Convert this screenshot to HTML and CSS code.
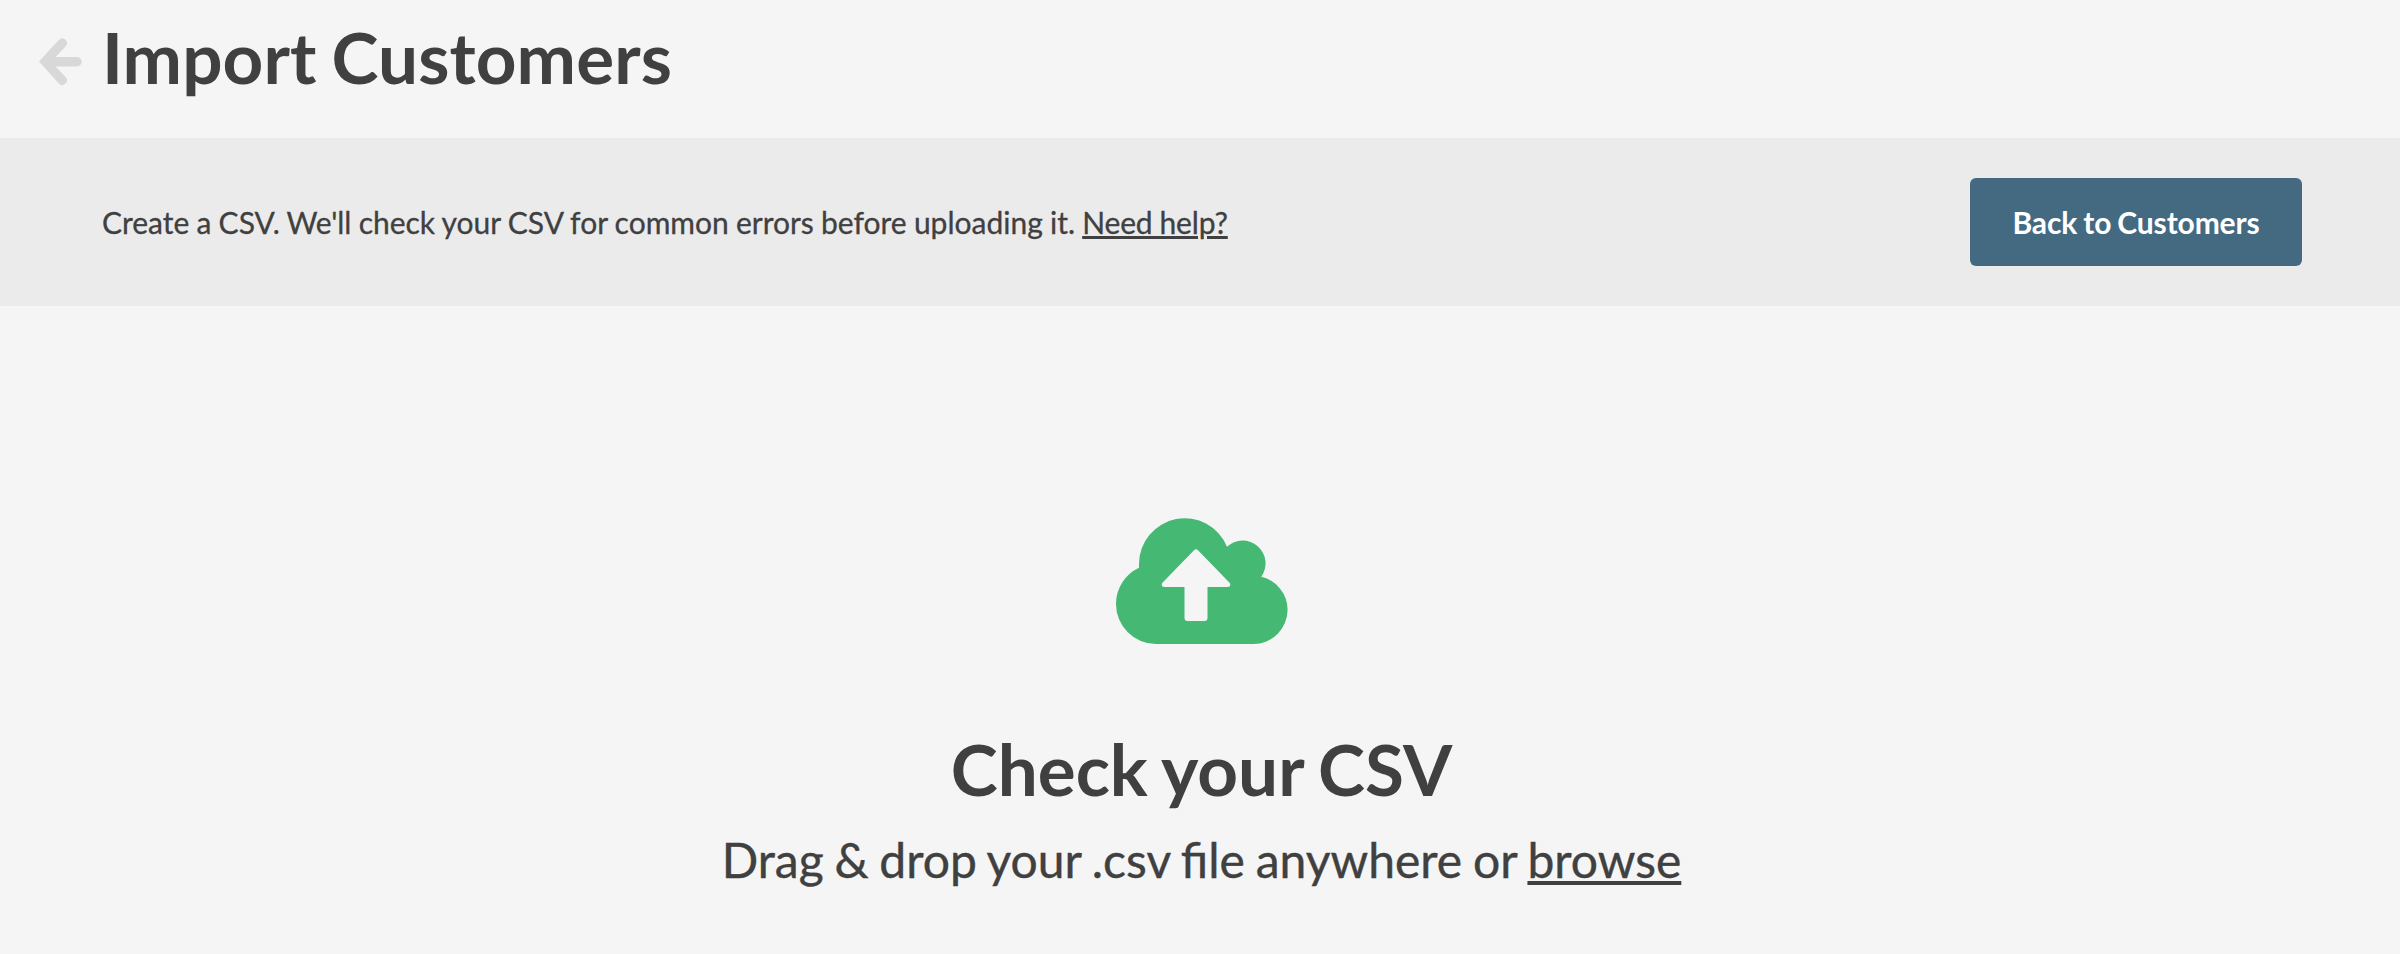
FILE: index.html
```html
<!DOCTYPE html>
<html lang="en">
<head>
<meta charset="utf-8">
<title>Import Customers</title>
<link rel="stylesheet" href="styles.css">
</head>
<body>
<header class="page-header">
  <a class="back" href="#" aria-label="Back"><svg class="back-icon" viewBox="0 0 43 48"><path fill="currentColor" d="M0 23.600L19.900 1.800A4.700 4.700 0 0 1 27 7.900L16.500 19.100H38A4.650 4.650 0 0 1 38 28.400H16.500L27 39.500A4.700 4.700 0 0 1 19.900 45.600Z"/></svg></a>
  <h1 class="title">Import Customers</h1>
</header>
<section class="toolbar">
  <p class="hint">Create a CSV. We'll check your CSV for common errors before uploading it. <a class="link help-link" href="#">Need help?</a></p>
  <a class="button" href="#">Back to Customers</a>
</section>
<main class="dropzone">
  <svg class="cloud" viewBox="0 0 172 126"><path fill="currentColor" d="M40 126A40 40 0 0 1 0 86A40 40 0 0 1 23 49.700V45.700A45.700 45.700 0 0 1 111 28.700A22.900 22.900 0 0 1 145.300 58.700A34.300 34.300 0 0 1 171.600 91.700A34.300 34.300 0 0 1 137.200 126Z"/><path class="cloud-arrow" d="M68.500 100V69H48.500Q45.700 69 45.700 66.500Q45.700 65.400 46.700 64.400L78 32.200Q80 30.400 82 32.200L113.300 64.400Q114.300 65.400 114.300 66.500Q114.300 69 111.500 69H91.500V100Q91.500 103 88.500 103H71.500Q68.500 103 68.500 100Z"/></svg>
  <h2 class="heading">Check your CSV</h2>
  <p class="subheading">Drag &amp; drop your .csv file anywhere or <a class="link" href="#">browse</a></p>
</main>
</body>
</html>
```

FILE: styles.css
```css
* { box-sizing: border-box; }
body { margin: 0; background: #f5f5f5; color: #404040; font-family: Lato, sans-serif; }
h1, h2, p { margin: 0; }
.page-header { display: flex; align-items: center; height: 138px; padding: 0 0 24px 39px; }
.back { display: flex; color: #d8d8d8; margin: 9px 20px 0 0; }
.back-icon { width: 43px; height: 48px; }
.title { font-size: 71px; line-height: 86px; letter-spacing: 0.1px; word-spacing: -2.5px; }
.toolbar { display: flex; align-items: center; justify-content: space-between; height: 168px; padding: 0 98px 0 102px; background: #ebebeb; }
.hint { font-size: 30px; word-spacing: -0.5px; -webkit-text-stroke: 0.3px currentColor; }
.link { color: inherit; text-decoration: underline; }
.help-link { letter-spacing: -0.15px; }
.button { display: flex; align-items: center; justify-content: center; width: 332px; height: 88px; border-radius: 6px; background: #446a82; color: #fff; font-size: 30px; font-weight: 700; letter-spacing: -0.15px; word-spacing: -1px; text-decoration: none; }
.dropzone { display: flex; flex-direction: column; align-items: center; padding: 212px 0 0 3px; }
.cloud { width: 172px; height: 126px; color: #45b873; }
.cloud-arrow { fill: #f5f5f5; }
.heading { margin-top: 82px; font-size: 71px; line-height: 86px; word-spacing: -2.3px; }
.subheading { margin-top: 19px; font-size: 48px; line-height: 58px; word-spacing: -1.5px; -webkit-text-stroke: 0.4px currentColor; }
```
